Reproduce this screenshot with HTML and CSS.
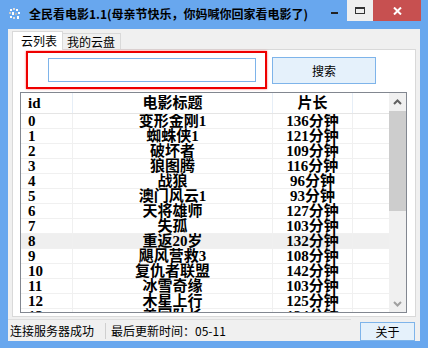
FILE: index.html
```html
<!DOCTYPE html>
<html lang="zh-CN">
<head>
  <meta charset="UTF-8" />
  <title>全民看电影1.1</title>
  <link rel="stylesheet" href="styles.css">
</head>
<body>
  <div class="titlebar">
    <svg class="app-icon" width="12" height="12" viewBox="0 0 12 12">
      <rect x="1" y="1" width="2" height="2" fill="#fff"/>
      <rect x="4" y="0" width="2" height="2" fill="#dcdcdc"/>
      <rect x="7" y="1" width="2" height="2" fill="#fff"/>
      <rect x="0" y="4" width="2" height="2" fill="#c8c8c8"/>
      <rect x="3" y="4" width="2" height="3" fill="#fff"/>
      <rect x="9" y="4" width="2" height="2" fill="#fff"/>
      <rect x="6" y="5" width="2" height="2" fill="#b4b4b4"/>
      <rect x="1" y="8" width="2" height="2" fill="#fff"/>
      <rect x="4" y="9" width="2" height="2" fill="#dcdcdc"/>
      <rect x="8" y="8" width="2" height="3" fill="#fff"/>
    </svg>
    <span class="title">全民看电影1.1(母亲节快乐，你妈喊你回家看电影了)</span>
    <div class="controls">
      <div class="ctl ctl-min"><span class="min-bar"></span></div>
      <div class="ctl ctl-max"><span class="max-box"></span></div>
      <div class="ctl ctl-close">
        <svg width="9" height="8" viewBox="0 0 9 8">
          <path d="M1 0.5 L8 7.5 M8 0.5 L1 7.5" stroke="#fff" stroke-width="2"/>
        </svg>
      </div>
    </div>
  </div>

  <div class="client">
    <div class="tabs">
      <div class="tab active">云列表</div>
      <div class="tab">我的云盘</div>
    </div>

    <div class="panel">
      <div class="search-row">
        <div class="search-box">
          <input type="text" class="search-input" />
        </div>
        <button class="btn search-btn">搜索</button>
      </div>

      <div class="list">
        <div class="table">
          <div class="row head">
            <div class="cell c-id">id</div>
            <div class="cell c-title">电影标题</div>
            <div class="cell c-len">片长</div>
            <div class="cell c-fill"></div>
          </div>
          <div id="rows" class="rows"></div>
        </div>
        <div class="scrollbar">
          <div class="sb-btn">
            <svg width="9" height="6" viewBox="0 0 9 6"><path d="M1 5 L4.5 1.5 L8 5" fill="none" stroke="#606060" stroke-width="2"/></svg>
          </div>
          <div class="sb-thumb"></div>
          <div class="sb-track"></div>
          <div class="sb-btn">
            <svg width="9" height="6" viewBox="0 0 9 6"><path d="M1 1 L4.5 4.5 L8 1" fill="none" stroke="#a0a0a0" stroke-width="2"/></svg>
          </div>
        </div>
      </div>
    </div>

    <div class="statusbar">
      <div class="status-info">
        <span class="status-cell first">连接服务器成功</span>
        <span class="status-cell">最后更新时间：05-11</span>
      </div>
      <button class="btn about-btn">关于</button>
    </div>
  </div>

  <script>
    const movies = [
      ["0", "变形金刚1", "136分钟"],
      ["1", "蜘蛛侠1", "121分钟"],
      ["2", "破坏者", "109分钟"],
      ["3", "狼图腾", "116分钟"],
      ["4", "战狼", "96分钟"],
      ["5", "澳门风云1", "93分钟"],
      ["6", "天将雄师", "127分钟"],
      ["7", "失孤", "103分钟"],
      ["8", "重返20岁", "132分钟"],
      ["9", "飓风营救3", "108分钟"],
      ["10", "复仇者联盟", "142分钟"],
      ["11", "冰雪奇缘", "103分钟"],
      ["12", "木星上行", "125分钟"],
      ["13", "美国队长", "124分钟"]
    ];

    const rows = document.getElementById("rows");
    movies.forEach((m, i) => {
      const row = document.createElement("div");
      row.className = "row" + (i === 8 ? " hover" : "");
      row.innerHTML =
        '<div class="cell c-id">' + m[0] + '</div>' +
        '<div class="cell c-title">' + m[1] + '</div>' +
        '<div class="cell c-len">' + m[2] + '</div>' +
        '<div class="cell c-fill"></div>';
      rows.appendChild(row);
    });
  </script>
</body>
</html>
```

FILE: styles.css
```css
body {
  margin: 0;
  width: 428px;
  height: 348px;
  overflow: hidden;
  background: #68a7ee;
  font-family: "Noto Sans CJK SC", sans-serif;
  font-size: 12px;
  color: #000;
}

.titlebar {
  display: flex;
  height: 29px;
}

.app-icon {
  margin: 8px 0 0 9px;
}

.title {
  margin-left: 8px;
  font-weight: bold;
  line-height: 28px;
  white-space: nowrap;
}

.controls {
  display: flex;
  margin-left: auto;
  margin-right: 7px;
  height: 21px;
}

.ctl {
  display: flex;
  align-items: center;
  justify-content: center;
  height: 21px;
}

.ctl-min {
  width: 26px;
}

.min-bar {
  width: 7px;
  height: 2px;
  background: #222;
  margin-top: 5px;
}

.ctl-max {
  width: 26px;
  background: #efefef;
}

.max-box {
  width: 10px;
  height: 7px;
  box-sizing: border-box;
  border: 1px solid #333;
  border-top-width: 2px;
}

.ctl-close {
  width: 48px;
  background: #c75050;
}

.client {
  margin: 0 8px;
  height: 312px;
  background: #f0f0f0;
  display: flex;
  flex-direction: column;
}

.tabs {
  display: flex;
  align-items: flex-end;
  height: 20px;
  padding-left: 4px;
}

.tab {
  height: 16px;
  line-height: 15px;
  border: 1px solid #d9d9d9;
  border-bottom: none;
  box-sizing: border-box;
  background: #f0f0f0;
  white-space: nowrap;
}

.tab.active {
  height: 19px;
  margin-bottom: -1px;
  width: 51px;
  padding: 1px 0 0 8px;
  background: #fff;
  position: relative;
  z-index: 1;
}

.tab + .tab {
  border-left: none;
  width: 58px;
  padding-left: 4px;
}

.panel {
  margin: 0 4px;
  height: 268px;
  box-sizing: border-box;
  border: 1px solid #d9d9d9;
  background: #fff;
}

.search-row {
  display: flex;
  align-items: center;
  gap: 5px;
  height: 38px;
  margin: 1px 0 0 13px;
}

.search-box {
  width: 241px;
  height: 38px;
  box-sizing: border-box;
  border: 2px solid #ee0000;
  box-shadow: 0 0 2px rgba(255, 0, 0, 0.6);
  padding: 5px 9px 5px 20px;
}

.search-input {
  display: block;
  width: 208px;
  height: 24px;
  box-sizing: border-box;
  margin: 0;
  border: 1px solid #7eb4ea;
  outline: none;
}

.btn {
  font-family: "Noto Sans CJK SC", sans-serif;
  font-size: 12px;
  color: #000;
  background: #e5f1fb;
  border: 1px solid #7eb4ea;
  box-sizing: border-box;
  padding: 0;
  margin: 0;
}

.search-btn {
  width: 104px;
  height: 27px;
}

.list {
  display: flex;
  margin: 3px 8px 0 7px;
  height: 221px;
  box-sizing: border-box;
  border: 1px solid #828790;
  overflow: hidden;
}

.table {
  flex: 1;
  display: flex;
  flex-direction: column;
  overflow: hidden;
  font-family: "Liberation Serif", "Noto Sans CJK SC", serif;
  font-weight: bold;
  font-size: 15px;
}

.rows {
  flex: 1;
  overflow: hidden;
}

.row {
  display: grid;
  grid-template-columns: 52px 200px 80px 1fr;
  height: 15px;
  line-height: 14px;
  box-sizing: border-box;
  border-bottom: 1px solid #f0f0f0;
  white-space: nowrap;
}

.row.head {
  flex: none;
  height: 21px;
  line-height: 20px;
  border-bottom: 1px solid #e5e5e5;
}

.row.hover {
  background: #efefef;
}

.cell {
  border-right: 1px solid #f0f0f0;
  text-align: center;
}

.head .cell {
  border-right-color: #e6eef7;
}

.cell.c-id {
  text-align: left;
  padding-left: 7px;
}

.cell.c-fill {
  border-right: none;
}

.scrollbar {
  width: 17px;
  display: flex;
  flex-direction: column;
  background: #f0f0f0;
}

.sb-btn {
  height: 17px;
  display: flex;
  align-items: center;
  justify-content: center;
}

.sb-thumb {
  height: 100px;
  margin-top: 1px;
  background: #cdcdcd;
}

.sb-track {
  flex: 1;
}

.statusbar {
  display: flex;
  height: 24px;
}

.status-info {
  display: flex;
  align-items: center;
  width: 343px;
  margin-top: 2px;
  border-top: 1px solid #dedede;
}

.status-cell {
  padding-left: 5px;
}

.status-cell.first {
  width: 95px;
  padding-left: 2px;
  border-right: 1px solid #cfcfcf;
  line-height: 16px;
}

.about-btn {
  width: 55px;
  height: 19px;
  margin: 5px 5px 0 auto;
}
```
